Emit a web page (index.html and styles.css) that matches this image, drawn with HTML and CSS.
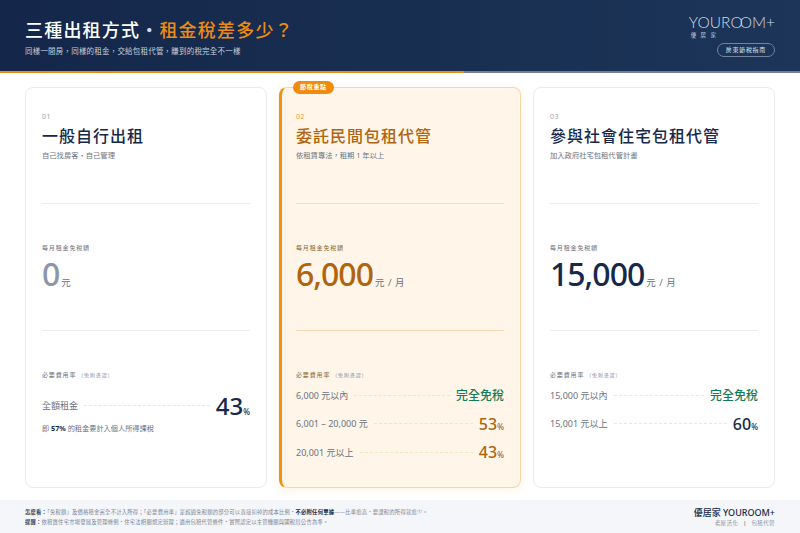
FILE: index.html
```html
<!DOCTYPE html>
<html lang="zh-Hant">
<head>
    <meta charset="UTF-8">
    <meta name="viewport" content="width=device-width, initial-scale=1.0">
    <link rel="stylesheet" href="styles.css">
    <title>三種出租方式・租金稅差多少&#xFF1F;</title>
</head>
<body>
    <header class="header">
        <div class="header-text">
            <h1>三種出租方式<span class="dot">・</span><span class="accent">租金稅差多少&#xFF1F;</span></h1>
            <p>同樣一間房&#xFF0C;同樣的租金&#xFF0C;交給包租代管&#xFF0C;賺到的稅完全不一樣</p>
        </div>
        <div class="brand">
            <div class="logo">YOUR<span class="logo-o">OO</span>M+</div>
            <div class="logo-sub">優居家</div>
            <div class="pill">房東節稅指南</div>
        </div>
    </header>
    <div class="progress"><div class="progress-fill"></div></div>

    <main class="cards">
        <section class="card">
            <div class="card-head">
                <div class="num">01</div>
                <h2>一般自行出租</h2>
                <p class="desc">自己找房客・自己管理</p>
            </div>
            <div class="exempt">
                <div class="label">每月租金免稅額</div>
                <div class="amount muted">0<span class="unit">元</span></div>
            </div>
            <div class="rates">
                <div class="label">必要費用率<small>&#xFF08;免附憑證&#xFF09;</small></div>
                <div class="row row-single">
                    <span class="row-name">全額租金</span><span class="leader"></span>
                    <span class="value value-big">43<small>%</small></span>
                </div>
                <p class="note">即 <b>57%</b> 的租金要計入個人所得課稅</p>
            </div>
        </section>

        <section class="card card-featured">
            <div class="badge">節稅重點</div>
            <div class="card-head">
                <div class="num">02</div>
                <h2>委託民間包租代管</h2>
                <p class="desc">依租賃專法&#xFF0C;租期 1 年以上</p>
            </div>
            <div class="exempt">
                <div class="label">每月租金免稅額</div>
                <div class="amount">6,000<span class="unit">元 / 月</span></div>
            </div>
            <div class="rates">
                <div class="label">必要費用率<small>&#xFF08;免附憑證&#xFF09;</small></div>
                <div class="row">
                    <span class="row-name">6,000 元以內</span><span class="leader"></span>
                    <span class="free">完全免稅</span>
                </div>
                <div class="row">
                    <span class="row-name">6,001 – 20,000 元</span><span class="leader"></span>
                    <span class="value">53<small>%</small></span>
                </div>
                <div class="row">
                    <span class="row-name">20,001 元以上</span><span class="leader"></span>
                    <span class="value">43<small>%</small></span>
                </div>
            </div>
        </section>

        <section class="card">
            <div class="card-head">
                <div class="num">03</div>
                <h2>參與社會住宅包租代管</h2>
                <p class="desc">加入政府社宅包租代管計畫</p>
            </div>
            <div class="exempt">
                <div class="label">每月租金免稅額</div>
                <div class="amount">15,000<span class="unit">元 / 月</span></div>
            </div>
            <div class="rates">
                <div class="label">必要費用率<small>&#xFF08;免附憑證&#xFF09;</small></div>
                <div class="row">
                    <span class="row-name">15,000 元以內</span><span class="leader"></span>
                    <span class="free">完全免稅</span>
                </div>
                <div class="row">
                    <span class="row-name">15,001 元以上</span><span class="leader"></span>
                    <span class="value">60<small>%</small></span>
                </div>
            </div>
        </section>
    </main>

    <footer class="footer">
        <div class="footnotes">
            <p><b>怎麼看&#xFF1A;</b>「免稅額」及價格租金完全不計入所得&#xFF1B;「必要費用率」是超過免稅額的部分可以直接扣掉的成本比例・<b class="dark">不必附任何單據</b>——比率愈高・要課稅的所得就愈少。</p>
            <p><b>提醒&#xFF1A;</b>依租賃住宅市場發展及管理條例・住宅法相關規定辦理&#xFF1B;適用包租代管條件・實際認定以主管機關與國稅局公告為準。</p>
        </div>
        <div class="footer-brand">
            <div class="footer-name">優居家 YOUROOM+</div>
            <div class="footer-tag">老屋活化 <span>|</span> 包租代管</div>
        </div>
    </footer>
</body>
</html>
```

FILE: styles.css
```css
* {
    box-sizing: border-box;
}

body {
    display: flex;
    flex-direction: column;
    height: 100vh;
    margin: 0;
    overflow: hidden;
    background-color: #fff;
    color: #16294a;
    font-family: "Noto Sans", "Noto Sans CJK TC", sans-serif;
}

h1, h2, p {
    margin: 0;
}

/* header */
.header {
    display: flex;
    justify-content: space-between;
    align-items: flex-start;
    height: 71px;
    padding: 0 25px;
    background: linear-gradient(90deg, #14274a, #1c3558);
    color: #fff;
}

.header-text {
    padding-top: 18px;
}

.header h1 {
    font-size: 18px;
    font-weight: 500;
    line-height: 24px;
    letter-spacing: 1.2px;
}

.dot {
    color: #d5dce8;
}

.accent {
    color: #ef8c0e;
}

.header-text p {
    margin-top: 4px;
    font-size: 7.5px;
    line-height: 11px;
    letter-spacing: 0.2px;
    color: #c4cede;
}

.brand {
    display: flex;
    flex-direction: column;
    align-items: flex-end;
    padding-top: 13px;
}

.logo {
    font-family: "Lato", sans-serif;
    font-size: 15.5px;
    font-weight: 300;
    line-height: 18px;
    color: #d3dae6;
}

.logo-o {
    letter-spacing: -3px;
    margin-right: 3px;
}

.logo-sub {
    align-self: flex-start;
    margin-left: 2px;
    font-size: 5.5px;
    line-height: 8px;
    letter-spacing: 4.4px;
    color: #c4cede;
}

.pill {
    margin-top: 4px;
    padding: 0 8px;
    height: 14px;
    border: 1px solid #75849c;
    border-radius: 7px;
    font-size: 6px;
    line-height: 12px;
    letter-spacing: 0.7px;
    color: #dde3ec;
}

.progress {
    height: 2px;
    background-color: #6f7f98;
}

.progress-fill {
    width: 58%;
    height: 100%;
    background-color: #ef8c0e;
}

/* cards */
.cards {
    flex: 1;
    display: grid;
    grid-template-columns: repeat(3, 1fr);
    gap: 12px;
    padding: 14px 25px 12px;
    min-height: 0;
}

.card {
    position: relative;
    display: flex;
    flex-direction: column;
    padding: 0 16px;
    background-color: #fff;
    border: 1px solid #e9ebef;
    border-radius: 8px;
}

.card-featured {
    padding-left: 14px;
    background-color: #fff6e9;
    border-color: #f5d7a5;
    border-left: 3px solid #f0920f;
    box-shadow: 0 2px 8px rgba(240, 146, 15, 0.12);
}

.badge {
    position: absolute;
    top: -7px;
    left: 11px;
    height: 13px;
    padding: 0 7px;
    border-radius: 7px;
    background-color: #ef8c0e;
    color: #fff;
    font-size: 6px;
    font-weight: 700;
    line-height: 13px;
    letter-spacing: 0.7px;
}

.card-head {
    height: 116px;
    padding-top: 23px;
    border-bottom: 1px solid #ebedf2;
}

.card-featured .card-head,
.card-featured .exempt {
    border-color: #f5dcb3;
}

.num {
    font-size: 7px;
    line-height: 12px;
    letter-spacing: 0.6px;
    color: #9aa3b3;
}

.card-featured .num {
    color: #ef9a2a;
}

.card h2 {
    margin-top: 2px;
    font-size: 16px;
    font-weight: 500;
    line-height: 22px;
    letter-spacing: 1px;
}

.card-featured h2 {
    color: #b1640f;
}

.desc {
    margin-top: 3px;
    font-size: 7.3px;
    line-height: 11px;
    color: #6b7280;
}

.exempt {
    display: flex;
    flex-direction: column;
    justify-content: center;
    height: 127px;
    padding-top: 12px;
    border-bottom: 1px solid #ebedf2;
}

.label {
    font-size: 6px;
    line-height: 9px;
    letter-spacing: 0.85px;
    color: #6b7280;
}

.card-featured .label {
    color: #8a6a3a;
}

.label small {
    margin-left: 2px;
    font-size: 5px;
    color: #8b93a3;
}

.amount {
    margin-top: 1px;
    font-size: 32px;
    font-weight: 500;
    line-height: 40px;
    letter-spacing: -1px;
}

.card-featured .amount {
    color: #b1640f;
}

.amount.muted {
    color: #8a97ab;
}

.unit {
    margin-left: 2px;
    font-size: 9.5px;
    font-weight: 400;
    letter-spacing: 0.5px;
    color: #6b7280;
}

.rates {
    padding-top: 40px;
}

.row {
    display: flex;
    align-items: center;
    height: 28.5px;
}

.rates .label + .row {
    margin-top: 1px;
}

.rates .label + .row-single {
    margin-top: 10px;
}

.row-single {
    height: 30px;
}

.row-name {
    font-size: 9px;
    color: #6b7280;
}

.leader {
    flex: 1;
    margin: 0 6px;
    border-top: 1px dashed #e5e7ee;
}

.card-featured .leader {
    border-color: #f7e2c2;
}

.free {
    font-size: 12px;
    font-weight: 500;
    color: #0f7d58;
}

.value {
    font-size: 16px;
    font-weight: 500;
}

.card-featured .value {
    color: #b1640f;
}

.value small {
    font-size: 8px;
}

.value-big {
    font-size: 24px;
    font-weight: 500;
}

.note {
    margin-top: 3px;
    font-size: 7.2px;
    line-height: 11px;
    color: #6b7280;
}

.note b {
    color: #16294a;
}

/* footer */
.footer {
    display: flex;
    justify-content: space-between;
    align-items: center;
    height: 33px;
    padding: 2px 25px 0;
    background-color: #f4f6f9;
}

.footnotes {
    font-size: 5.3px;
    line-height: 9.5px;
    letter-spacing: 0.22px;
    color: #7a8394;
}

.footnotes b {
    color: #33425c;
}

.footnotes .dark {
    color: #16294a;
}

.footer-brand {
    text-align: right;
}

.footer-name {
    font-size: 9px;
    font-weight: 500;
    line-height: 12px;
}

.footer-tag {
    font-size: 5.5px;
    line-height: 9px;
    letter-spacing: 0.4px;
    color: #8b93a3;
}

.footer-tag span {
    margin: 0 3px;
    color: #33425c;
}
```
